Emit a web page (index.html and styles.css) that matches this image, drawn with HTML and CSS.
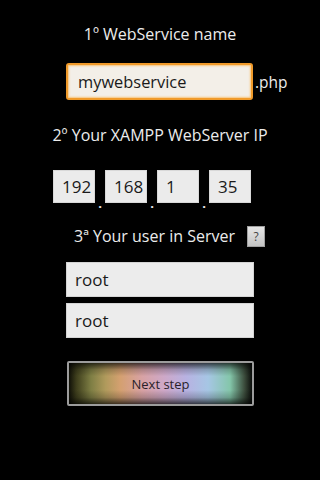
FILE: index.html
```
<!DOCTYPE html>
<html>
<head>
<meta charset="utf-8">
<link rel="stylesheet" href="styles.css">
</head>
<body>
<div class="screen">
  <div class="title t1">1º WebService name</div>
  <div class="name-row">
    <div class="field focused">mywebservice</div>
    <span class="suffix">.php</span>
  </div>
  <div class="title t2">2º Your XAMPP WebServer IP</div>
  <div class="ip-row">
    <div class="octet">192</div><span class="dot">.</span>
    <div class="octet">168</div><span class="dot">.</span>
    <div class="octet">1</div><span class="dot">.</span>
    <div class="octet">35</div>
  </div>
  <div class="user-title">
    <span class="title">3ª Your user in Server</span>
    <span class="help">?</span>
  </div>
  <div class="user-fields">
    <div class="field plain">root</div>
    <div class="field plain">root</div>
  </div>
  <div class="button"><span>Next step</span></div>
</div>
</body>
</html>
```
FILE: styles.css
```
html, body {
  margin: 0;
  padding: 0;
  background: #000;
}
.screen {
  width: 320px;
  height: 480px;
  display: flex;
  flex-direction: column;
  font-family: "Open Sans", "Noto Sans", sans-serif;
  color: #ececec;
}
.title {
  font-size: 16px;
  line-height: 20px;
  text-align: center;
  color: #ececec;
}
.t1 {
  margin-top: 24px;
}
.name-row {
  margin-top: 19px;
  padding-left: 66px;
  display: flex;
  align-items: center;
}
.field {
  box-sizing: border-box;
  background: #ececec;
  color: #1a1a1a;
  font-size: 17px;
  display: flex;
  align-items: center;
  padding-left: 8px;
}
.focused {
  width: 187px;
  height: 37px;
  border: 2px solid #f09a2a;
  border-radius: 3px;
  background: #f3efe8;
  box-shadow: inset 0 0 2px 1px #f7c47a;
  padding-left: 10px;
  font-size: 16.4px;
}
.suffix {
  font-size: 15.5px;
  color: #ececec;
  margin-left: 2px;
  margin-top: 1px;
}
.t2 {
  margin-top: 25px;
}
.ip-row {
  margin-top: 25px;
  padding-left: 53px;
  display: flex;
  align-items: flex-end;
  height: 33px;
}
.octet {
  box-sizing: border-box;
  width: 42px;
  height: 33px;
  background: #ebebeb;
  border: 1px solid #d8d8d8;
  color: #1a1a1a;
  font-size: 17px;
  display: flex;
  align-items: center;
  padding-left: 8px;
}
.dot {
  width: 10px;
  text-align: center;
  font-size: 13px;
  font-weight: bold;
  line-height: 8px;
  color: #ececec;
  margin-bottom: -4px;
}
.user-title {
  margin-top: 20px;
  height: 24px;
  display: flex;
  align-items: center;
  padding-left: 74px;
}
.user-title .title {
  margin-top: 1px;
}
.help {
  box-sizing: border-box;
  width: 18px;
  height: 21px;
  margin-left: 12px;
  margin-top: 2px;
  background: linear-gradient(#e6e6e6, #c4c4c4);
  border: 1px solid #a0a0a0;
  color: #444;
  font-size: 12px;
  display: flex;
  align-items: center;
  justify-content: center;
}
.user-fields {
  margin-top: 15px;
  padding-left: 66px;
  display: flex;
  flex-direction: column;
  gap: 6px;
}
.plain {
  width: 188px;
  height: 35px;
  border: 1px solid #d4d4d4;
  background: #ececec;
}
.button {
  box-sizing: border-box;
  margin-top: 23px;
  margin-left: 67px;
  width: 187px;
  height: 45px;
  border: 2px solid #9c9c9c;
  border-radius: 2px;
  background:
    linear-gradient(to bottom, rgba(0,0,0,0.7) 0%, rgba(0,0,0,0.2) 16%, rgba(0,0,0,0) 32%, rgba(0,0,0,0) 66%, rgba(0,0,0,0.2) 84%, rgba(0,0,0,0.7) 100%),
    linear-gradient(to right, #101008 0%, #3e3e1c 4%, #7e7e44 12%, #b09a5c 20%, #d4a070 28%, #d8a2a4 40%, #cea8c8 52%, #b8b2e2 64%, #a6c6e4 76%, #84c6aa 88%, #3a4a3a 96%, #0a0c0a 100%);
  display: flex;
  align-items: center;
  justify-content: center;
  color: #2a1f2a;
  font-size: 13px;
}
```
